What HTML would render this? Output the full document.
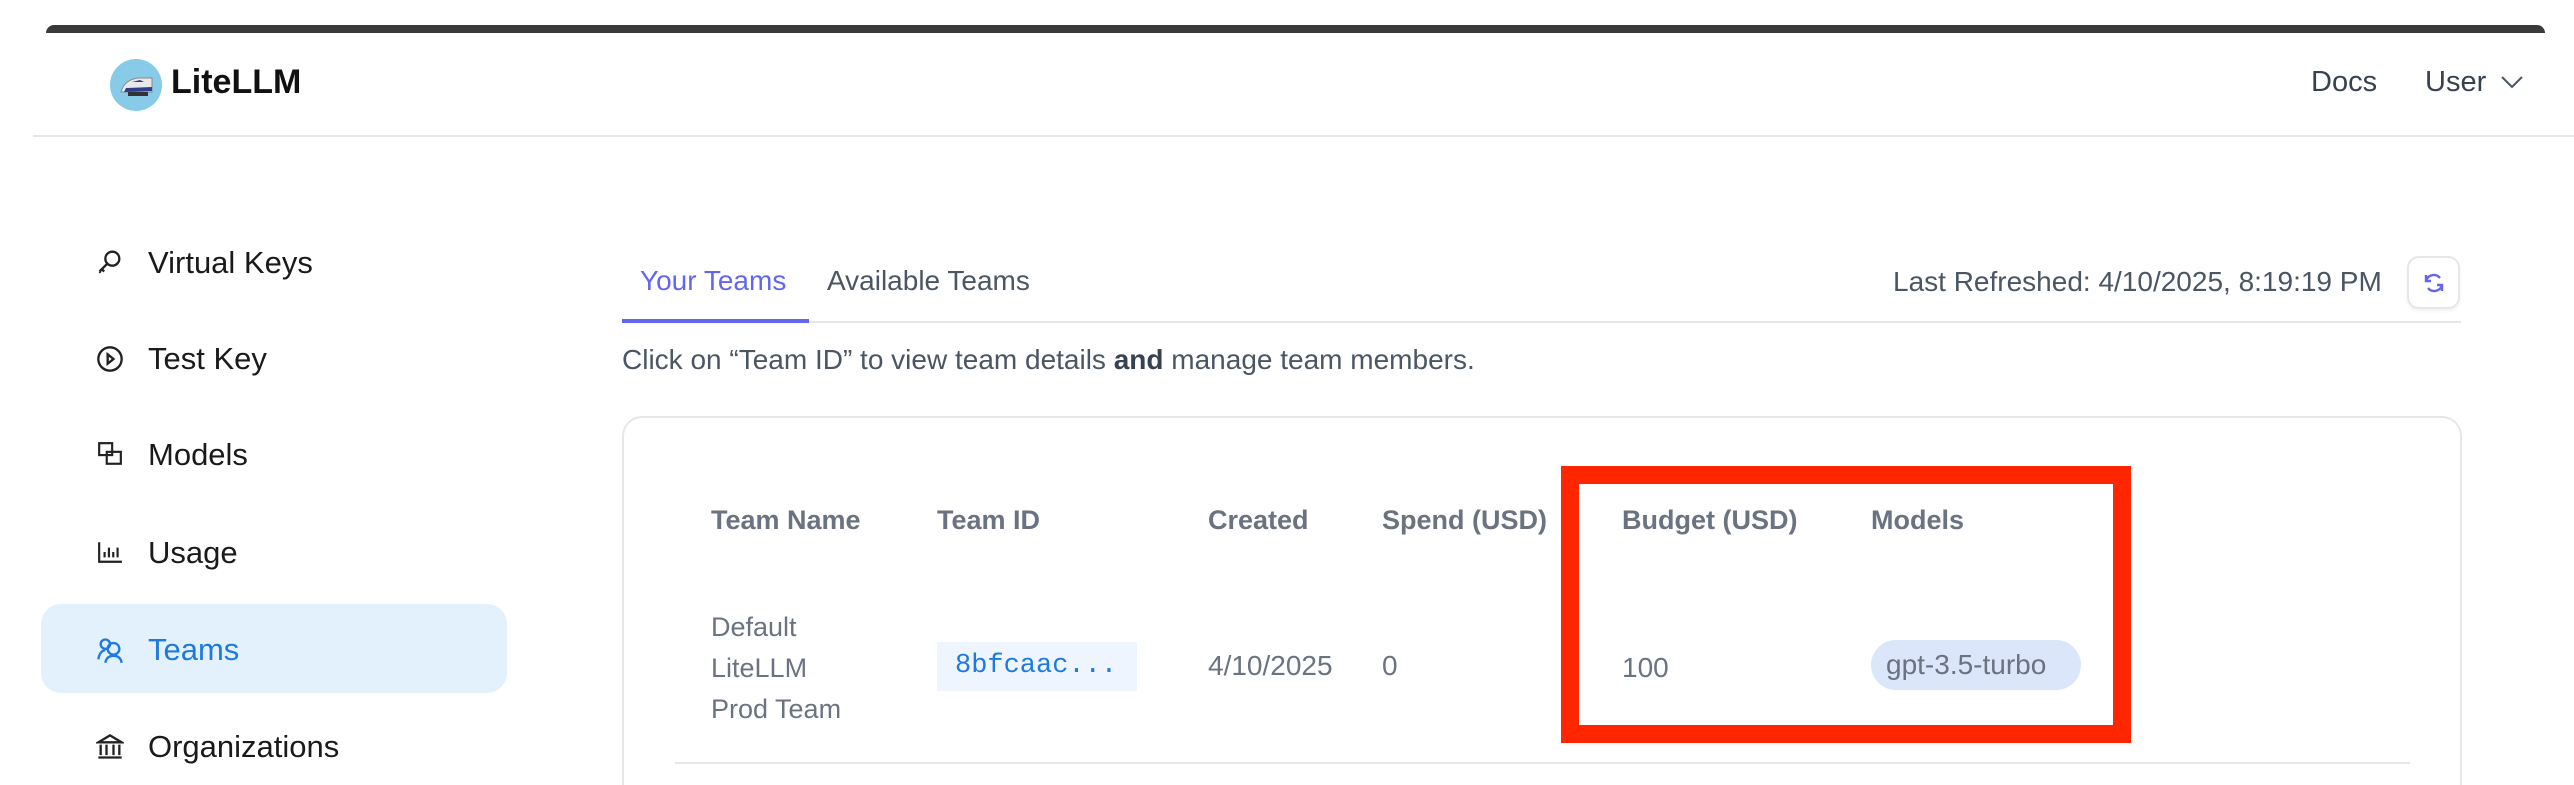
<!DOCTYPE html>
<html style="height:785px;overflow:hidden"><head><meta charset="utf-8"><style>
*{margin:0;padding:0;box-sizing:border-box}
body{width:2574px;height:785px;background:#fff;position:relative;overflow:hidden;font-family:"Liberation Sans",sans-serif}
.a{position:absolute;white-space:nowrap}
.nav{font-size:31px;color:#1a1a1a;line-height:40px}
.th{font-size:27px;font-weight:bold;color:#6b7280;line-height:36px}
.td{font-size:27px;color:#6b7280;line-height:36px}
</style></head><body>
<div class="a" style="left:46px;top:25px;width:2499px;height:8px;background:#3a3a3a;border-radius:8px 8px 0 0"></div>
<div class="a" style="left:33px;top:135px;width:2541px;height:2px;background:#e5e7eb"></div>
<div class="a" style="left:110px;top:59px;width:52px;height:52px;border-radius:50%;background:#87cbe8"></div>
<svg class="a" style="left:118px;top:70px" width="38" height="30" viewBox="0 0 38 30"><path d="M3 22 Q6 10 20 8 L34 8 L34 22 Z" fill="#e8e8e8" stroke="#888" stroke-width="1"/><path d="M8 18 L34 17 L34 21 L6 22Z" fill="#2c3e8f"/><path d="M14 12 L22 10 L26 12 Z" fill="#2c3e8f"/><rect x="10" y="22" width="20" height="4" fill="#333"/></svg>
<div class="a" style="left:171px;top:62px;font-size:34px;font-weight:bold;color:#111;line-height:40px">LiteLLM</div>
<div class="a" style="left:2311px;top:64px;font-size:29px;color:#374151;line-height:36px">Docs</div>
<div class="a" style="left:2425px;top:64px;font-size:29px;color:#374151;line-height:36px">User</div>
<svg class="a" style="left:2500px;top:74px" width="24" height="16" viewBox="0 0 24 16"><path d="M2 3 L12 13 L22 3" fill="none" stroke="#4b5563" stroke-width="2"/></svg>

<div class="a" style="left:41px;top:604px;width:466px;height:89px;border-radius:20px;background:#e3f1fd"></div>
<svg class="a" style="left:96px;top:247px" width="28" height="28" viewBox="0 0 24 24" fill="none" stroke="#222" stroke-width="2"><circle cx="14" cy="10" r="6"/><path d="M10 14 L3 21 M5 19 L7 21 M3 21 L4 22"/></svg>
<div class="a nav" style="left:148px;top:243px">Virtual Keys</div>
<svg class="a" style="left:96px;top:345px" width="28" height="28" viewBox="0 0 24 24" fill="none" stroke="#222" stroke-width="2"><circle cx="12" cy="12" r="10"/><path d="M10 8 L15 12 L10 16Z"/></svg>
<div class="a nav" style="left:148px;top:339px">Test Key</div>
<svg class="a" style="left:97px;top:441px" width="26" height="26" viewBox="0 0 24 24" fill="none" stroke="#222" stroke-width="2"><rect x="2" y="2" width="12" height="11"/><rect x="9" y="10" width="13" height="11"/></svg>
<div class="a nav" style="left:148px;top:435px">Models</div>
<svg class="a" style="left:97px;top:540px" width="26" height="24" viewBox="0 0 24 22" fill="none" stroke="#222" stroke-width="2"><path d="M2 2 V20 H23 M7 16 V11 M11 16 V7 M15 16 V11 M19 16 V7"/></svg>
<div class="a nav" style="left:148px;top:533px">Usage</div>
<svg class="a" style="left:96px;top:636px" width="28" height="28" viewBox="0 0 24 24" fill="none" stroke="#1f7ae0" stroke-width="2"><circle cx="8" cy="7" r="4"/><circle cx="15" cy="11" r="5"/><path d="M2 20 Q3 13 8 12 M8 23 Q9 17 15 17 Q21 17 22 23"/></svg>
<div class="a nav" style="left:148px;top:630px;color:#1f7ae0">Teams</div>
<svg class="a" style="left:96px;top:733px" width="28" height="28" viewBox="0 0 24 24" fill="none" stroke="#222" stroke-width="2"><path d="M2 8 L12 2 L22 8 Z M4 10 V19 M9 10 V19 M15 10 V19 M20 10 V19 M2 21 H22"/></svg>
<div class="a nav" style="left:148px;top:727px">Organizations</div>

<div class="a" style="left:640px;top:263px;font-size:28px;color:#6366f1;line-height:36px">Your Teams</div>
<div class="a" style="left:827px;top:263px;font-size:28px;color:#4b5563;line-height:36px">Available Teams</div>
<div class="a" style="left:622px;top:321px;width:1839px;height:2px;background:#e5e7eb"></div>
<div class="a" style="left:622px;top:319px;width:187px;height:4px;background:#6366f1"></div>
<div class="a" style="left:1893px;top:264px;font-size:28px;color:#4b5563;line-height:36px">Last Refreshed: 4/10/2025, 8:19:19 PM</div>
<div class="a" style="left:2407px;top:256px;width:53px;height:53px;border:2px solid #e5e7eb;border-radius:12px;box-shadow:0 2px 3px rgba(0,0,0,.06)"></div>
<svg class="a" style="left:2422px;top:271px" width="24" height="24" viewBox="0 0 24 24" fill="none" stroke="#6366f1" stroke-width="2.4"><path d="M18 7 A8 8 0 0 0 4 10 M4 4 V10 H9 M6 17 A8 8 0 0 0 20 14 M20 20 V14 H15"/></svg>
<div class="a" style="left:622px;top:342px;font-size:28px;color:#4b5563;line-height:36px">Click on “Team ID” to view team details <b style="color:#374151">and</b> manage team members.</div>

<div class="a" style="left:622px;top:416px;width:1840px;height:369px;border:2px solid #e5e7eb;border-bottom:none;border-radius:20px 20px 0 0"></div>
<div class="a th" style="left:711px;top:502px">Team Name</div>
<div class="a th" style="left:937px;top:502px">Team ID</div>
<div class="a th" style="left:1208px;top:502px">Created</div>
<div class="a th" style="left:1382px;top:502px">Spend (USD)</div>
<div class="a th" style="left:1622px;top:502px">Budget (USD)</div>
<div class="a th" style="left:1871px;top:502px">Models</div>
<div class="a td" style="left:711px;top:607px;line-height:41px;white-space:normal">Default<br>LiteLLM<br>Prod Team</div>
<div class="a" style="left:937px;top:642px;width:200px;height:49px;background:#eef5ff"></div>
<div class="a" style="left:955px;top:648px;font-family:'Liberation Mono',monospace;font-size:27px;color:#1f7ae0;line-height:36px">8bfcaac...</div>
<div class="a td" style="left:1208px;top:648px;font-size:28px">4/10/2025</div>
<div class="a td" style="left:1382px;top:648px;font-size:28px">0</div>
<div class="a td" style="left:1622px;top:650px;font-size:28px">100</div>
<div class="a" style="left:1871px;top:640px;width:210px;height:50px;border-radius:25px;background:#dbe6fb"></div>
<div class="a td" style="left:1886px;top:647px;font-size:28px">gpt-3.5-turbo</div>
<div class="a" style="left:675px;top:762px;width:1735px;height:2px;background:#e5e7eb"></div>
<div class="a" style="left:1561px;top:466px;width:570px;height:277px;border:18px solid #ff2600"></div>
</body></html>
